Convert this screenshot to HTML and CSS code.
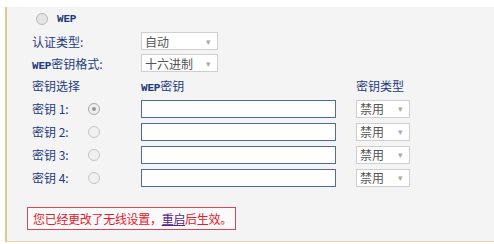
FILE: index.html
```html
<!DOCTYPE html>
<html lang="zh">
<head>
  <meta charset="UTF-8">
  <title>无线安全设置</title>
  <link rel="stylesheet" href="styles.css">
</head>
<body>
  <div class="panel">
    <div class="form">
      <div class="row">
        <span class="radio first"></span>
        <span class="wep">WEP</span>
      </div>
      <div class="row">
        <span class="label">认证类型:</span>
        <span class="select wide">自动<i>▾</i></span>
      </div>
      <div class="row">
        <span class="label"><b class="wep">WEP</b>密钥格式:</span>
        <span class="select wide">十六进制<i>▾</i></span>
      </div>
      <div class="row head">
        <span class="klabel">密钥选择</span>
        <span class="kradio"></span>
        <span class="kinput"><span><b class="wep">WEP</b>密钥</span></span>
        <span>密钥类型</span>
      </div>
      <div class="row key">
        <span class="klabel">密钥 1:</span>
        <span class="kradio"><span class="radio on"></span></span>
        <span class="kinput"><input type="text"></span>
        <span class="select small">禁用<i>▾</i></span>
      </div>
      <div class="row key">
        <span class="klabel">密钥 2:</span>
        <span class="kradio"><span class="radio"></span></span>
        <span class="kinput"><input type="text"></span>
        <span class="select small">禁用<i>▾</i></span>
      </div>
      <div class="row key">
        <span class="klabel">密钥 3:</span>
        <span class="kradio"><span class="radio"></span></span>
        <span class="kinput"><input type="text"></span>
        <span class="select small">禁用<i>▾</i></span>
      </div>
      <div class="row key">
        <span class="klabel">密钥 4:</span>
        <span class="kradio"><span class="radio"></span></span>
        <span class="kinput"><input type="text"></span>
        <span class="select small">禁用<i>▾</i></span>
      </div>
    </div>
    <div class="notice">您已经更改了无线设置，<a href="#">重启</a>后生效。</div>
  </div>
</body>
</html>
```

FILE: styles.css
```css
body { margin: 0; background: #fff; font-family: "Noto Sans CJK SC", "Liberation Sans", sans-serif; font-size: 12px; color: #1f3c7e; }
.panel { margin: 7px 5px 0 5px; width: 479px; border-left: 2px solid #e2c88e; border-right: 2px solid #e2c88e; border-bottom: 1px solid #f3cfa6; background: #f4f4f4; padding: 1px 0 11px 20px; }
.form { padding-left: 5px; }
.row { display: flex; align-items: center; height: 22px; }
.row.head, .row.key { height: 23px; }
.wep { font-family: "Liberation Mono", monospace; font-weight: bold; font-size: 11px; letter-spacing: -0.2px; }
.radio { display: inline-block; width: 10px; height: 10px; border-radius: 50%; border: 1px solid #c4c4c4; background: #f0f0f0; box-sizing: content-box; position: relative; }
.radio.first { margin: 0 9px 0 4px; background: #e4e4e4; border-color: #b8b8b8; }
.radio.on { border-color: #aaa; background: #eee; }
.radio.on::after { content: ""; position: absolute; left: 3px; top: 3px; width: 4px; height: 4px; border-radius: 50%; background: #999; }
.label { width: 109px; }
.klabel { width: 56px; }
.kradio { width: 53px; display: flex; }
.kinput { width: 215px; display: flex; }
input { width: 195px; height: 18px; box-sizing: border-box; margin: 0; border: 1px solid #4e6aa8; background: #fff; padding: 0 3px; }
.select { display: flex; align-items: center; justify-content: space-between; height: 18px; box-sizing: border-box; border: 1px solid #cfcfcf; background: #fff; color: #555; padding: 0 6px 0 3px; }
.select i { font-style: normal; font-size: 9px; color: #aaa; }
.select.wide { width: 77px; }
.select.small { width: 54px; }
.notice { margin-top: 18px; display: inline-block; height: 23px; line-height: 21px; box-sizing: border-box; border: 1px solid #d5485a; background: #fafafa; color: #e2202e; padding: 0 3px 0 5px; letter-spacing: -0.3px; }
.notice a { color: #5a1e8c; text-decoration: underline; }
```
